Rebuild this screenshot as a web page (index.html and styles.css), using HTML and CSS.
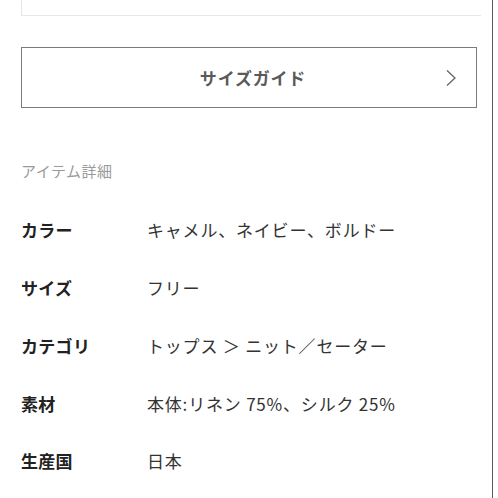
FILE: index.html
```html
<!DOCTYPE html>
<html lang="ja">
<head>
    <meta charset="UTF-8">
    <meta name="viewport" content="width=device-width, initial-scale=1.0">
    <title>item-detail</title>
    <link rel="stylesheet" href="styles.css">
</head>
<body>
    <div class="page">
        <div class="prev-box"></div>

        <a class="size-guide" href="#">
            <span class="size-guide-label">サイズガイド</span>
            <svg class="chevron" width="12" height="18" viewBox="0 0 12 18">
                <polyline points="2,1.5 10,9 2,16.5" fill="none" stroke="#666" stroke-width="1.3"/>
            </svg>
        </a>

        <h3 class="section-title">アイテム詳細</h3>

        <dl class="detail-list">
            <dt>カラー</dt>
            <dd>キャメル、ネイビー、ボルドー</dd>
            <dt>サイズ</dt>
            <dd>フリー</dd>
            <dt>カテゴリ</dt>
            <dd>トップス ＞ ニット／セーター</dd>
            <dt>素材</dt>
            <dd>本体:リネン 75%、シルク 25%</dd>
            <dt>生産国</dt>
            <dd>日本</dd>
        </dl>
    </div>
</body>
</html>
```

FILE: styles.css
```css
body {
    margin: 0;
    padding: 0;
    background-color: #fff;
    font-family: "Noto Sans CJK JP", "Noto Sans", sans-serif;
    color: #333;
}

.page {
    width: 493px;
    height: 498px;
    box-sizing: border-box;
    border-right: 1.5px solid #5a5a5a;
    padding-left: 21px;
    overflow: hidden;
}

.prev-box {
    width: 459px;
    height: 15px;
    border: 1px solid #e6e6e6;
    border-top: none;
    border-right: none;
}

.size-guide {
    display: flex;
    align-items: center;
    justify-content: center;
    position: relative;
    box-sizing: border-box;
    width: 456px;
    height: 61px;
    margin-top: 31px;
    border: 1.5px solid #7a7a7a;
    text-decoration: none;
}

.size-guide-label {
    font-size: 17px;
    font-weight: bold;
    color: #5a5a5a;
    letter-spacing: 0.8px;
    padding-left: 8px;
}

.chevron {
    position: absolute;
    right: 19px;
    top: 21px;
}

.section-title {
    margin: 52px 0 0;
    font-size: 15px;
    font-weight: normal;
    line-height: 22px;
    color: #9a9a9a;
    letter-spacing: 0.5px;
}

.detail-list {
    display: grid;
    grid-template-columns: 126px 1fr;
    grid-auto-rows: 57.75px;
    align-items: center;
    margin: 19px 0 0;
    font-size: 17px;
}

.detail-list dt {
    font-weight: bold;
    color: #222;
    letter-spacing: 0.3px;
}

.detail-list dd {
    margin: 0;
    color: #333;
    letter-spacing: 0.8px;
}
```
